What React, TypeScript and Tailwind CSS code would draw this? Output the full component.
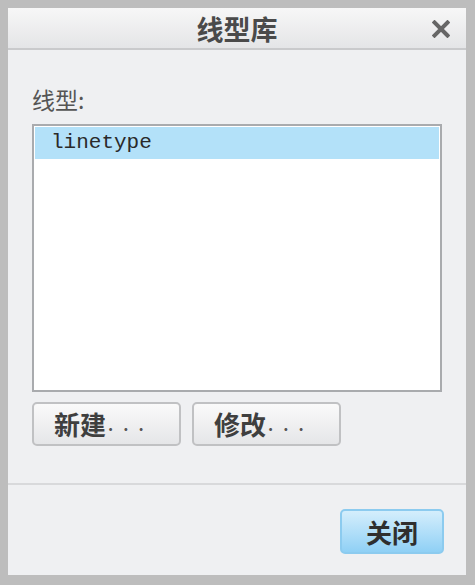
export default function App() {
  const cjk = { fontFamily: '"Noto Sans CJK SC", "Noto Sans", sans-serif' };
  return (
    <div className="w-[475px] h-[585px] bg-[#bdbdbd] p-[8px] pr-[9px] pb-[10px]" style={cjk}>
      <div className="flex flex-col h-full bg-[#eff0f2]">
        {/* title bar */}
        <div className="relative h-[42px] flex items-center justify-center bg-gradient-to-b from-[#f7f7f7] to-[#e4e5e7] border-b-2 border-[#c9cacc]">
          <span className="text-[27px] font-bold text-[#4a4a4a] leading-none">线型库</span>
          <svg className="absolute right-[16px] top-[12px]" width="18" height="18" viewBox="0 0 18 18">
            <path d="M2.5 2.5 L15.5 15.5 M15.5 2.5 L2.5 15.5" stroke="#666" strokeWidth="4" strokeLinecap="square" />
          </svg>
        </div>

        {/* body */}
        <div className="flex flex-col px-[24px] pt-[38px]">
          <div className="text-[23px] text-[#555] leading-none">线型:</div>
          <div className="mt-[13px] h-[268px] bg-white border-2 border-[#a9abae] p-[1px]">
            <div className="h-[32px] bg-[#b3e1f9] flex items-center pl-[16px]">
              <span className="text-[21px] text-[#2a2a2a]" style={{ fontFamily: '"Liberation Mono", monospace' }}>
                linetype
              </span>
            </div>
          </div>
          <div className="flex gap-[11px] mt-[10px]">
            <button className="w-[149px] h-[44px] rounded-[5px] border-2 border-[#c0c1c3] bg-gradient-to-b from-[#fafafa] to-[#e5e6e8] flex items-center pl-[20px] text-[26px] font-bold text-[#3f3f3f] leading-none">
              新建<span className="text-[16px] tracking-[10px] font-bold ml-[2px] text-[#555]">...</span>
            </button>
            <button className="w-[149px] h-[44px] rounded-[5px] border-2 border-[#c0c1c3] bg-gradient-to-b from-[#fafafa] to-[#e5e6e8] flex items-center pl-[20px] text-[26px] font-bold text-[#3f3f3f] leading-none">
              修改<span className="text-[16px] tracking-[10px] font-bold ml-[2px] text-[#555]">...</span>
            </button>
          </div>
        </div>

        <div className="mt-[37px] border-t-2 border-[#d8d9db]" />

        {/* footer */}
        <div className="flex justify-end pr-[22px] pt-[24px]">
          <button className="w-[104px] h-[45px] rounded-[5px] border-2 border-[#8ccbef] bg-gradient-to-b from-[#d4eefc] to-[#8fd0f5] flex items-center justify-center text-[26px] font-bold text-[#2f2f2f] leading-none">
            关闭
          </button>
        </div>
      </div>
    </div>
  );
}
